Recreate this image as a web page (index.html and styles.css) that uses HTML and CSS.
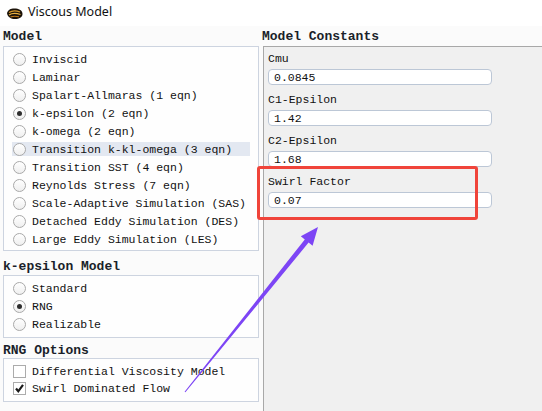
FILE: index.html
```html
<!DOCTYPE html>
<html>
<head>
<meta charset="utf-8">
<link rel="stylesheet" href="styles.css">
</head>
<body>
<div class="window">
  <div class="titlebar">
    <svg class="appicon" width="17" height="13" viewBox="0 0 17 13">
      <path d="M1 6 C2 2 6 1 10 1.5 C14 2 16.5 4 16.5 7 C16.5 10.5 13 12 9 12 C5 12 1.5 10 1 6 Z" fill="#1b1208"/>
      <path d="M3 5.5 C6 3.5 10 3.5 14 5" stroke="#d99a2b" stroke-width="1.3" fill="none"/>
      <path d="M3 8 C6 6 10 6 14.5 7.5" stroke="#e8b040" stroke-width="1.3" fill="none"/>
      <path d="M4.5 10 C7 9 10 9 13 9.8" stroke="#c07a18" stroke-width="1.1" fill="none"/>
    </svg>
    <span class="title">Viscous Model</span>
  </div>
  <div class="main">
    <div class="leftcol">
      <div class="group-label first">Model</div>
      <div class="box model-box">
        <div class="row"><span class="radio"></span><span>Inviscid</span></div>
        <div class="row"><span class="radio"></span><span>Laminar</span></div>
        <div class="row"><span class="radio"></span><span>Spalart-Allmaras (1 eqn)</span></div>
        <div class="row"><span class="radio on"></span><span>k-epsilon (2 eqn)</span></div>
        <div class="row"><span class="radio"></span><span>k-omega (2 eqn)</span></div>
        <div class="row hl"><span class="radio"></span><span>Transition k-kl-omega (3 eqn)</span></div>
        <div class="row"><span class="radio"></span><span>Transition SST (4 eqn)</span></div>
        <div class="row"><span class="radio"></span><span>Reynolds Stress (7 eqn)</span></div>
        <div class="row"><span class="radio"></span><span>Scale-Adaptive Simulation (SAS)</span></div>
        <div class="row"><span class="radio"></span><span>Detached Eddy Simulation (DES)</span></div>
        <div class="row"><span class="radio"></span><span>Large Eddy Simulation (LES)</span></div>
      </div>
      <div class="group-label second">k-epsilon Model</div>
      <div class="box ke-box">
        <div class="row"><span class="radio"></span><span>Standard</span></div>
        <div class="row"><span class="radio on"></span><span>RNG</span></div>
        <div class="row"><span class="radio"></span><span>Realizable</span></div>
      </div>
      <div class="group-label third">RNG Options</div>
      <div class="box rng-box">
        <div class="row crow"><span class="check"></span><span>Differential Viscosity Model</span></div>
        <div class="row crow"><span class="check"><svg width="11" height="11" viewBox="0 0 11 11"><path d="M2 5.5 L4.3 8.3 L9 1.8" stroke="#1a1a1a" stroke-width="2.2" fill="none"/></svg></span><span>Swirl Dominated Flow</span></div>
      </div>
    </div>
    <div class="rightcol">
      <div class="group-label first">Model Constants</div>
      <div class="panel">
        <div class="field">
          <div class="flabel">Cmu</div>
          <div class="input">0.0845</div>
        </div>
        <div class="field">
          <div class="flabel">C1-Epsilon</div>
          <div class="input">1.42</div>
        </div>
        <div class="field">
          <div class="flabel">C2-Epsilon</div>
          <div class="input">1.68</div>
        </div>
        <div class="field">
          <div class="flabel">Swirl Factor</div>
          <div class="input">0.07</div>
        </div>
      </div>
    </div>
  </div>
  <div class="redmark"></div>
  <svg class="arrow" width="542" height="411" viewBox="0 0 542 411">
    <polygon points="185.4,392.3 308.6,242.6 312.6,245.8 318,227 300.8,236.2 304.8,239.4 184.6,391.7" fill="#7d45f5"/>
  </svg>
</div>
</body>
</html>
```

FILE: styles.css
```css
html, body {
  margin: 0;
  padding: 0;
}
body {
  width: 542px;
  height: 411px;
  overflow: hidden;
  background: #fbfbfb;
  font-family: "Liberation Mono", "DejaVu Sans Mono", monospace;
  font-size: 11.5px;
  color: #111;
}
.window {
  position: relative;
  width: 542px;
  height: 411px;
  display: flex;
  flex-direction: column;
}
.titlebar {
  height: 26px;
  background: #ffffff;
  display: flex;
  align-items: center;
  padding-left: 6px;
  gap: 5px;
  flex: none;
}
.appicon {
  display: block;
}
.title {
  font-family: "Noto Sans", "Liberation Sans", sans-serif;
  font-size: 12.5px;
  color: #111;
  line-height: 1;
  margin-top: -1px;
}
.main {
  flex: 1;
  display: flex;
  min-height: 0;
}
.leftcol {
  width: 259px;
  padding-left: 3px;
  flex: none;
  display: flex;
  flex-direction: column;
}
.group-label {
  font-family: "Liberation Mono", "DejaVu Sans Mono", monospace;
  font-weight: bold;
  font-size: 13px;
  color: #1a1f2a;
  display: flex;
  align-items: center;
  white-space: nowrap;
}
.group-label.first {
  height: 19px;
  margin-top: 1px;
}
.group-label.second {
  height: 17px;
  margin-top: 7px;
}
.group-label.third {
  height: 16px;
  margin-top: 4px;
}
.box {
  width: 254px;
  border: 1px solid #cdd4e0;
  background: #fefefe;
}
.model-box {
  padding: 3px 0 2px 0;
}
.ke-box {
  padding: 3px 0 4px 0;
}
.rng-box {
  padding: 4px 0 4px 0;
}
.row {
  height: 18px;
  display: flex;
  align-items: center;
  gap: 6px;
  margin-left: 8px;
  width: 238px;
  padding-left: 1px;
  box-sizing: border-box;
  white-space: nowrap;
}
.crow {
  height: 17px;
}
.row.hl {
  background: linear-gradient(#e3e8f1, #e3e8f1) center / 100% 14px no-repeat;
}
.radio {
  width: 13px;
  height: 13px;
  box-sizing: border-box;
  border: 1px solid #a9a9a9;
  border-radius: 50%;
  background: linear-gradient(#ffffff, #efefef);
  flex: none;
  display: flex;
  align-items: center;
  justify-content: center;
}
.radio.on::after {
  content: "";
  width: 5px;
  height: 5px;
  border-radius: 50%;
  background: #2e2e2e;
}
.check {
  width: 13px;
  height: 13px;
  box-sizing: border-box;
  border: 1px solid #ababab;
  background: #fff;
  flex: none;
  display: flex;
  align-items: center;
  justify-content: center;
}
.check svg {
  display: block;
}
.rightcol {
  flex: 1;
  display: flex;
  flex-direction: column;
  min-width: 0;
}
.panel {
  flex: 1;
  margin-left: 1px;
  background: #f0f0f0;
  border-top: 1px solid #a8a8a8;
  border-left: 1px solid #a8a8a8;
  padding: 1px 0 0 4px;
}
.field {
  margin-bottom: 4px;
}
.flabel {
  height: 21px;
  display: flex;
  align-items: center;
  white-space: nowrap;
}
.input {
  width: 224px;
  height: 16px;
  box-sizing: border-box;
  border: 1px solid #bcc7d6;
  border-radius: 4px;
  background: #ffffff;
  padding-left: 5px;
  display: flex;
  align-items: center;
}
.redmark {
  position: absolute;
  left: 257px;
  top: 166px;
  width: 221px;
  height: 54px;
  box-sizing: border-box;
  border: 3px solid #f0443a;
  border-radius: 3px;
}
.arrow {
  position: absolute;
  left: 0;
  top: 0;
  pointer-events: none;
}
```
